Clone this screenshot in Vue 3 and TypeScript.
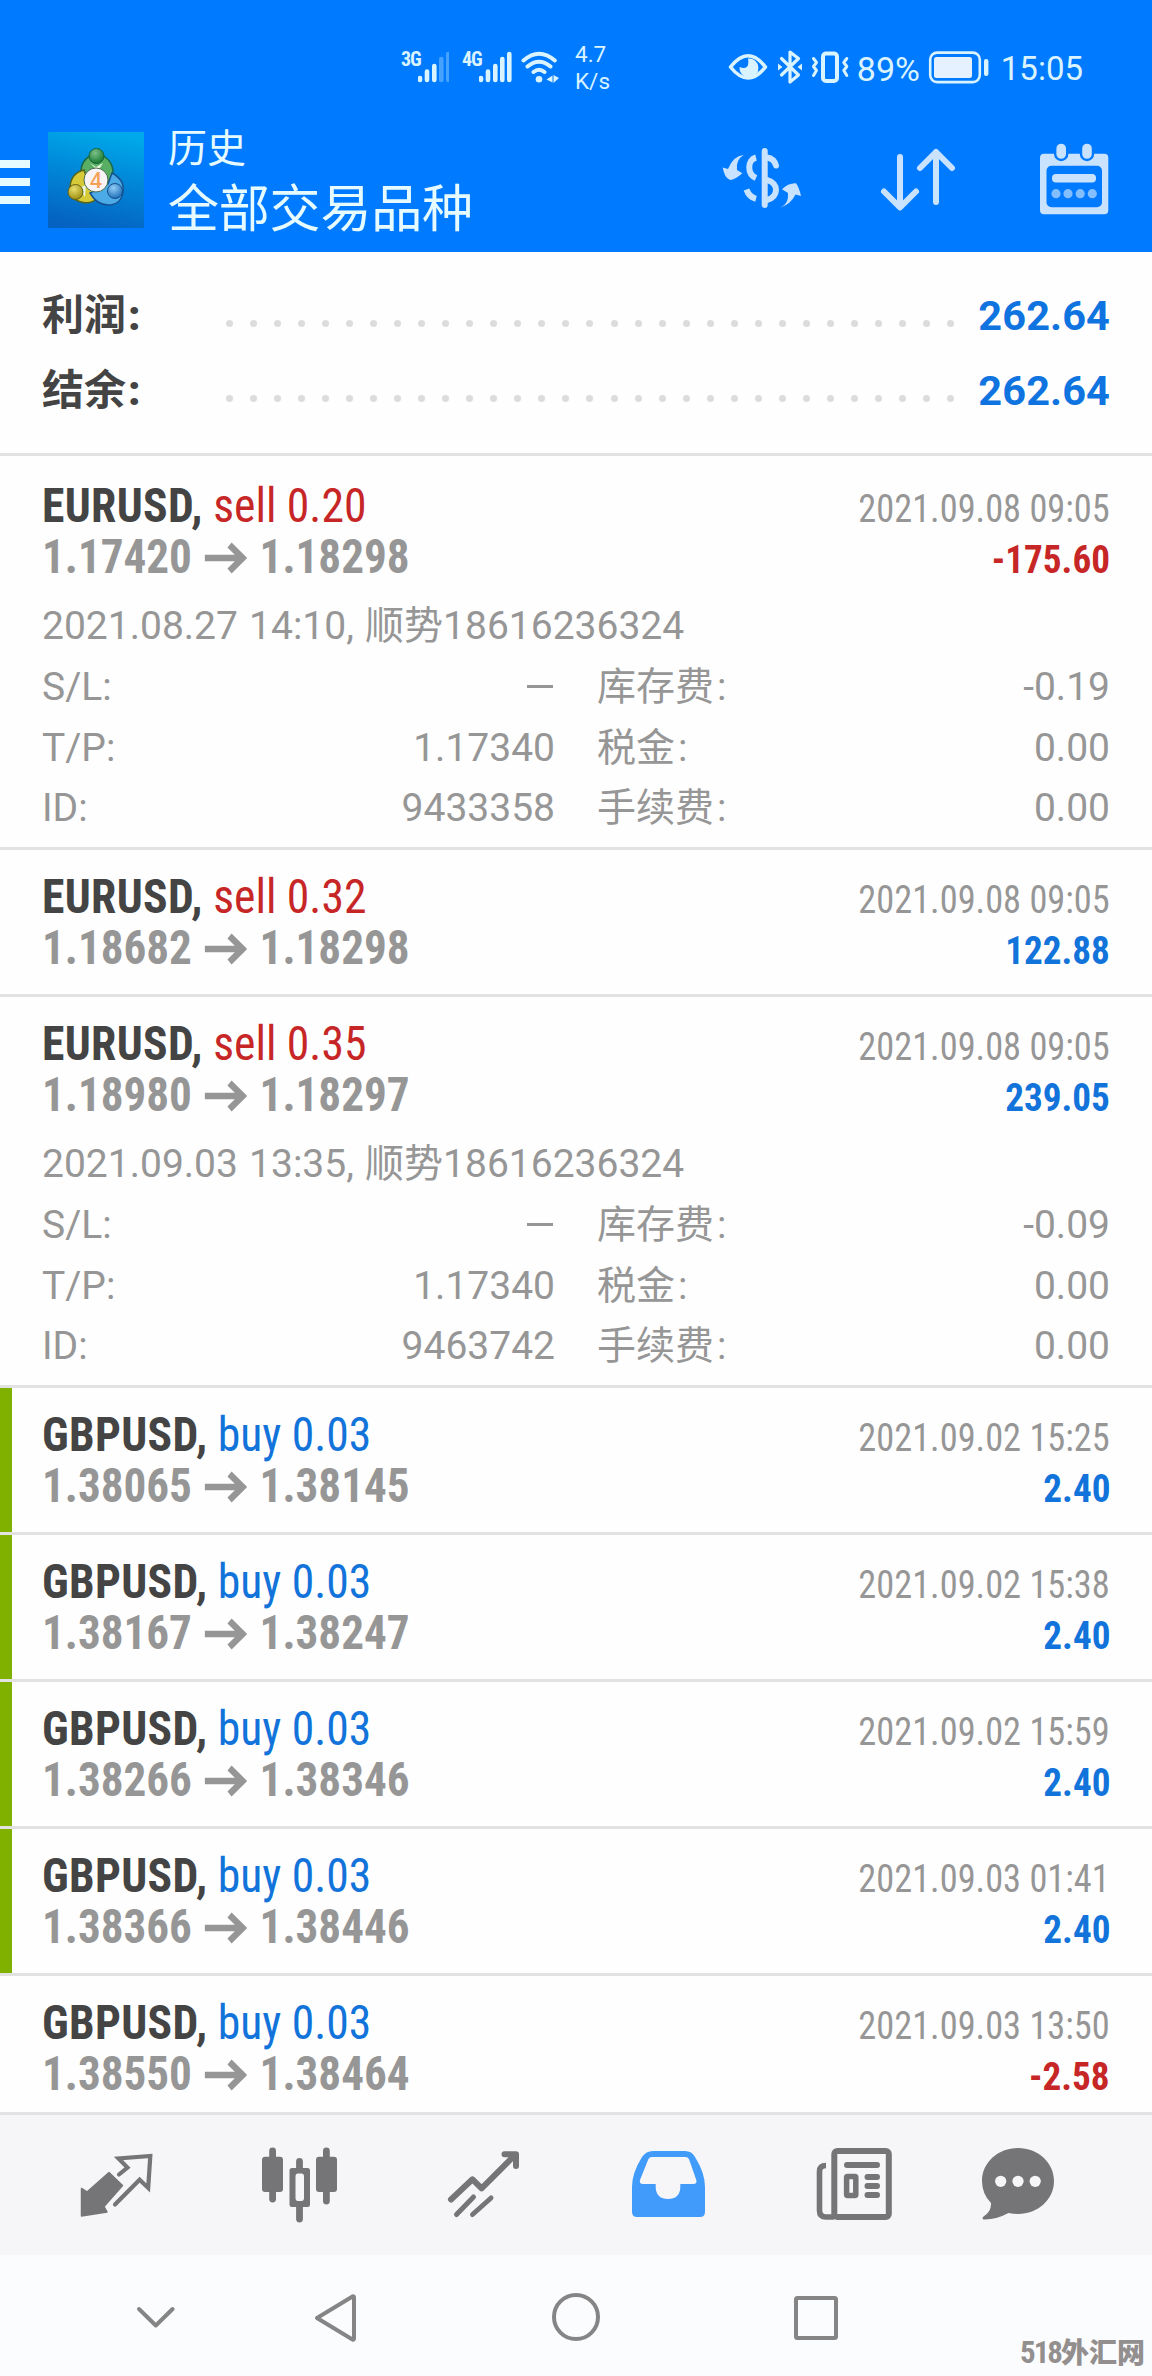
<script setup lang="ts">
interface Details {
  opened: string
  tp: string
  id: string
  swap: string
}

interface Trade {
  symbol: string
  side: 'buy' | 'sell'
  volume: string
  from: string
  to: string
  closed: string
  profit: string
  marked?: boolean
  details?: Details
}

const summary = [
  { label: '利润', value: '262.64' },
  { label: '结余', value: '262.64' },
]

const trades: Trade[] = [
  {
    symbol: 'EURUSD', side: 'sell', volume: '0.20', from: '1.17420', to: '1.18298',
    closed: '2021.09.08 09:05', profit: '-175.60',
    details: { opened: '2021.08.27 14:10, 顺势18616236324', tp: '1.17340', id: '9433358', swap: '-0.19' },
  },
  {
    symbol: 'EURUSD', side: 'sell', volume: '0.32', from: '1.18682', to: '1.18298',
    closed: '2021.09.08 09:05', profit: '122.88',
  },
  {
    symbol: 'EURUSD', side: 'sell', volume: '0.35', from: '1.18980', to: '1.18297',
    closed: '2021.09.08 09:05', profit: '239.05',
    details: { opened: '2021.09.03 13:35, 顺势18616236324', tp: '1.17340', id: '9463742', swap: '-0.09' },
  },
  { symbol: 'GBPUSD', side: 'buy', volume: '0.03', from: '1.38065', to: '1.38145', closed: '2021.09.02 15:25', profit: '2.40', marked: true },
  { symbol: 'GBPUSD', side: 'buy', volume: '0.03', from: '1.38167', to: '1.38247', closed: '2021.09.02 15:38', profit: '2.40', marked: true },
  { symbol: 'GBPUSD', side: 'buy', volume: '0.03', from: '1.38266', to: '1.38346', closed: '2021.09.02 15:59', profit: '2.40', marked: true },
  { symbol: 'GBPUSD', side: 'buy', volume: '0.03', from: '1.38366', to: '1.38446', closed: '2021.09.03 01:41', profit: '2.40', marked: true },
  { symbol: 'GBPUSD', side: 'buy', volume: '0.03', from: '1.38550', to: '1.38464', closed: '2021.09.03 13:50', profit: '-2.58' },
]
</script>

<template>
  <div class="screen">
    <header class="top">
      <div class="status">
        <div class="status-left">
          <span class="net">3G</span>
          <svg class="bars" width="31" height="34" viewBox="418 50 31 34">
            <g stroke="#d9f3ff" stroke-width="4.6" stroke-linecap="round">
              <path d="M420 78v2M427 71.5v8.5M434.3 66v14" />
              <path d="M441.3 59v21M448.3 54v26" opacity=".32" />
            </g>
          </svg>
          <span class="net net-4g">4G</span>
          <svg class="bars" width="33" height="34" viewBox="479 50 33 34">
            <path d="M481 78v2M488 71.5v8.5M495.3 66v14M502.3 59v21M509.3 54v26" stroke="#d9f3ff" stroke-width="4.6" stroke-linecap="round" />
          </svg>
          <svg class="wifi" width="40" height="34" viewBox="520 50 40 34" fill="none">
            <path d="M523.5 60.5Q539 47 554.8 60.5M527.5 66.5Q539 57 550.5 66.5M533.5 72Q539 67.500 544.5 72" stroke="#d9f3ff" stroke-width="4" stroke-linecap="round" />
            <circle cx="539" cy="79.3" r="3.3" fill="#d9f3ff" />
            <path d="M546.5 79.500l6-4v7zM553.5 75l5.500 3-5.500 5z" fill="#d9f3ff" />
          </svg>
          <div class="speed"><span>4.7</span><span>K/s</span></div>
        </div>
        <div class="status-right">
          <svg width="122" height="40" viewBox="728 47 122 40" fill="none" stroke="#d9f3ff" stroke-width="3.6" stroke-linecap="round" stroke-linejoin="round">
            <path d="M730.5 67Q748 44.500 765.5 67Q748 89 730.5 67z" />
            <path d="M748 58.500a9.500 9.500 0 1 1-8.500 8.500q7 2.500 8.500-2q.8-3.200 0-6.500z" fill="#d9f3ff" stroke="none" />
            <path d="M781.5 58.500L798.5 75l-8.500 7V52l8.500 6.500L781.5 75" stroke-width="3.2" />
            <path d="M778 63.500v7l4.500-3.500zM802 63.500v7l-4.500-3.500z" fill="#d9f3ff" stroke="none" />
            <rect x="823" y="53.5" width="14" height="27.5" rx="3" stroke-width="4" />
            <path d="M813.5 58.500l3 4-3 4 3 4-3 5M846.8 58.500l-3 4 3 4-3 4 3 5" stroke-width="3" />
          </svg>
          <span class="percent">89%</span>
          <svg width="62" height="36" viewBox="927 49 62 36" fill="none">
            <rect x="929.2" y="52.6" width="49.6" height="29.5" rx="7" stroke="#d9f3ff" stroke-width="2.6" />
            <rect x="933" y="57" width="38" height="21" rx="2.5" fill="#e5f1ff" />
            <rect x="983" y="59" width="4.4" height="17" rx="2" fill="#d9f3ff" />
          </svg>
          <span class="clock">15:05</span>
        </div>
      </div>

      <div class="appbar">
        <div class="menu"><i></i><i></i><i></i></div>
        <svg class="logo" width="96" height="96" viewBox="0 0 96 96">
          <defs>
            <linearGradient id="lgBg" x1="0.6" y1="0" x2="0.4" y2="1">
              <stop offset="0" stop-color="#00a9ea" />
              <stop offset=".45" stop-color="#0087d8" />
              <stop offset="1" stop-color="#0562c0" />
            </linearGradient>
            <radialGradient id="lgGreen" cx=".4" cy=".3" r=".7"><stop offset="0" stop-color="#7cc089" /><stop offset="1" stop-color="#187a30" /></radialGradient>
            <radialGradient id="lgGold" cx=".4" cy=".3" r=".7"><stop offset="0" stop-color="#e9df6c" /><stop offset="1" stop-color="#9c8f12" /></radialGradient>
            <radialGradient id="lgBlue" cx=".4" cy=".3" r=".7"><stop offset="0" stop-color="#92cdf5" /><stop offset="1" stop-color="#1f70bb" /></radialGradient>
          </defs>
          <rect width="96" height="96" fill="url(#lgBg)" />
          <path d="M33 47Q31 30 42 24Q49 20 57 25Q68 33 64 49L48 47z" fill="#58ae62" stroke="#1a6845" stroke-width="1.5" />
          <path d="M36 38Q23 41 22 55Q21 67 33 70Q43 73 51 65L39 47z" fill="#d6cb36" stroke="#57651e" stroke-width="1.5" />
          <path d="M64 41Q77 48 75 60Q73 73 60 73Q49 73 42 61L60 52z" fill="#4caae6" stroke="#155292" stroke-width="1.5" />
          <path d="M42 31l6 4 7-4-5 8zM31 56l7-3-1 12zM60 55l8 1-5 9z" fill="#e7f6dd" />
          <circle cx="48.5" cy="24" r="7.5" fill="url(#lgGreen)" stroke="#17623b" />
          <circle cx="27.5" cy="60" r="7.5" fill="url(#lgGold)" stroke="#675f18" />
          <circle cx="67" cy="59" r="7.5" fill="url(#lgBlue)" stroke="#164e8c" />
          <circle cx="48" cy="48" r="12" fill="#f8f3f4" stroke="#486c51" />
          <text x="48" y="55.5" text-anchor="middle" font-family="Open Sans, sans-serif" font-weight="600" font-size="21" fill="#f6a055">4</text>
        </svg>
        <div class="titles">
          <div class="title-small">历史</div>
          <div class="title-big">全部交易品种</div>
        </div>
        <svg class="tools" width="392" height="80" viewBox="720 138 392 80" fill="none" stroke="#c9e3ff" stroke-linecap="round" stroke-linejoin="round">
          <path d="M764.7 151v54" stroke-width="6" />
          <path d="M756 157.500C747 160 747 174 756 178M746.5 189.500Q749 197 756 198.800" stroke-width="6" stroke-linecap="butt" />
          <path d="M767 157.500Q774 158.500 776 165.500M767 180C779 183 779 197 767 200" stroke-width="6" />
          <path d="M743.7 155Q735.5 160 737 170L742.3 173.300Q735 180 730 180Q724.5 178 722.7 167.500L728 169Q733 156 743.7 155z" fill="#c9e3ff" stroke="none" />
          <path d="M780.3 207.700Q789 204 788 193L782 189.300Q788 183 796 183.300Q799 187 801 196L795.5 194.500Q791 204 780.3 207.700z" fill="#c9e3ff" stroke="none" />
          <path d="M900 157v50M884 191.500L900 207.500L916 191.500M936 202v-50M920 168L936 152L952 168" stroke-width="6" />
          <g fill="#c9e3ff" stroke="none">
            <path fill-rule="evenodd" d="M1044 153.700h60.300a4 4 0 0 1 4 4v52.600a4 4 0 0 1-4 4h-60.300a4 4 0 0 1-4-4v-52.600a4 4 0 0 1 4-4zM1051.5 165.700a5 5 0 0 0-5 5v31.600a5 5 0 0 0 5 5h45.500a5 5 0 0 0 5-5v-31.600a5 5 0 0 0-5-5z" />
            <rect x="1055.2" y="142.5" width="12" height="17.5" rx="6" stroke="#007aff" stroke-width="2.4" />
            <rect x="1081" y="142.5" width="12" height="17.5" rx="6" stroke="#007aff" stroke-width="2.4" />
            <rect x="1052" y="174" width="44" height="8.4" rx="4" />
            <g opacity=".65"><circle cx="1056" cy="193.7" r="4.6" /><circle cx="1068" cy="193.7" r="4.6" /><circle cx="1080.2" cy="193.7" r="4.6" /><circle cx="1092.3" cy="193.7" r="4.6" /></g>
          </g>
        </svg>
      </div>
    </header>

    <main class="list">
      <section class="summary">
        <div v-for="row in summary" :key="row.label" class="sum-row">
          <span class="sum-label">{{ row.label }}<b>:</b></span>
          <span class="dots"><i v-for="n in 31" :key="n"></i></span>
          <span class="sum-value">{{ row.value }}</span>
        </div>
      </section>

      <article v-for="trade in trades" :key="trade.from" class="trade" :class="{ marked: trade.marked }">
        <div class="line">
          <span class="name"><b>{{ trade.symbol }},</b> <span :class="trade.side">{{ trade.side }} {{ trade.volume }}</span></span>
          <time class="closed">{{ trade.closed }}</time>
        </div>
        <div class="line">
          <span class="price">
            <span>{{ trade.from }}</span>
            <svg width="45" height="32" viewBox="0 0 45 32" fill="none" stroke="#969696" stroke-width="6.5">
              <path d="M0 16h40M26.500 3l14 13-14 13" />
            </svg>
            <span>{{ trade.to }}</span>
          </span>
          <span class="profit" :class="{ loss: trade.profit.startsWith('-') }">{{ trade.profit }}</span>
        </div>
        <div v-if="trade.details" class="details">
          <div class="opened">{{ trade.details.opened }}</div>
          <div class="grid">
            <span>S/L:</span><span class="num"><i class="dash"></i></span><span class="cn">库存费<em>:</em></span><span class="num">{{ trade.details.swap }}</span>
            <span>T/P:</span><span class="num">{{ trade.details.tp }}</span><span class="cn">税金<em>:</em></span><span class="num">0.00</span>
            <span>ID:</span><span class="num">{{ trade.details.id }}</span><span class="cn">手续费<em>:</em></span><span class="num">0.00</span>
          </div>
        </div>
      </article>
    </main>

    <nav class="tabs">
      <svg width="1152" height="140" viewBox="0 2115 1152 140" fill="none" stroke="#757577" stroke-linecap="round" stroke-linejoin="round">
        <path d="M119 2174.500L127.5 2167.500L118.5 2158.500L150.3 2156L148.2 2188L139.6 2179.800L115 2204.500" stroke-width="4.2" stroke-linejoin="miter" />
        <path d="M81.5 2188.500L87 2192L109 2172.500L122.5 2185.500L104 2206.500L107 2212L81.5 2216z" fill="#757577" stroke-width="1.5" />
        <path d="M272.6 2151v48M326.4 2151v50M299.5 2161.500v8M299.5 2207v12" stroke-width="6.8" />
        <g fill="#757577" stroke="none">
          <rect x="262" y="2156.7" width="21" height="35.3" rx="3" />
          <rect x="316" y="2156.7" width="21" height="35.3" rx="3" />
          <path fill-rule="evenodd" d="M292 2168h15.500q2.500 0 2.500 2.500v34q0 2.500-2.500 2.500h-15.500q-2.500 0-2.500-2.500v-34q0-2.500 2.500-2.500zM298 2173.500q-2.500 0-2.500 3v21.500q0 3 2.500 3h3.500q2.500 0 2.500-3v-21.500q0-3-2.500-3z" />
        </g>
        <path d="M451 2199.500L472.5 2179.300L481.6 2188.300L515.5 2154.500M504.5 2154.200H516V2166" stroke-width="6" />
        <path d="M473.5 2197L456.5 2214.500M491 2198L472.5 2214.500" stroke-width="5" />
        <path fill="#419bfb" stroke="none" fill-rule="evenodd" d="M653 2151h32q7 0 10 6q10 16 10 30v25q0 5-5 5h-63q-5 0-5-5v-25q0-14 10-30q4-6 11-6zM652 2157q-3 0-4 3l-8 20q-1 4 3 4h12.700v4q1 11 12.300 11t12.300-11v-4h13q4 0 3-4l-7-20q-1-3-4-3z" />
        <rect x="834.3" y="2151" width="54.5" height="66" rx="3" stroke-width="6" />
        <path d="M826 2165.500q-6.500 0-6.500 6v39q0 6.500 6.500 6.500h8" stroke-width="5.6" stroke-linecap="butt" />
        <path d="M847 2165h30M867.5 2177h9.500M867.5 2186h9.500M867.5 2195h9.500" stroke-width="6" />
        <rect x="846.6" y="2176.5" width="9.2" height="19" rx="1" stroke-width="5.5" />
        <path fill="#757577" stroke="none" d="M1018 2148c20 0 36 14.500 36 33s-16 33-36 33q-5 0-9.500-1q-13 7-25 6.500q-2-1 0-3q8-5 7.500-13.500q-9-9-9-22c0-18.500 16-33 36-33z" />
        <g fill="#f6f6f8" stroke="none"><circle cx="1000.7" cy="2181.3" r="5.6" /><circle cx="1018" cy="2181.3" r="5.6" /><circle cx="1035.2" cy="2181.3" r="5.6" /></g>
      </svg>
    </nav>

    <footer class="system">
      <svg width="1152" height="121" viewBox="0 2255 1152 121" fill="none" stroke="#858585" stroke-width="4" stroke-linecap="round" stroke-linejoin="round">
        <path d="M139 2309L155.8 2325.500L172.6 2309" />
        <path d="M317 2318L352.5 2296.500q1.500-.5 1.500 1v41q0 1.500-1.500 1z" />
        <circle cx="576" cy="2317" r="22" />
        <rect x="796" y="2298" width="40" height="40" rx="1.5" />
      </svg>
      <div class="watermark"><span>518</span>外汇网</div>
    </footer>
  </div>
</template>

<style>
body {
  margin: 0;
  background: #fff;
}
</style>

<style scoped>
.screen {
  width: 1152px;
  height: 2376px;
  display: flex;
  flex-direction: column;
  overflow: hidden;
  background: #fefefe;
  font-family: Roboto, "Noto Sans CJK SC", sans-serif;
}
.top {
  height: 252px;
  flex: none;
  background: #007aff;
  color: #e6fbff;
}
.status {
  height: 110px;
  display: flex;
  justify-content: space-between;
  padding: 0 69px 0 401px;
  color: #d9f3ff;
}
.status svg { flex: none; }
.status-left {
  display: flex;
  padding-top: 50px;
  box-sizing: border-box;
}
.net {
  width: 17px;
  font-size: 20px;
  line-height: 18px;
  font-weight: 700;
  font-stretch: 75%;
  letter-spacing: -1px;
  white-space: nowrap;
}
.net-4g { margin-left: 13px; }
.wifi { margin-left: 8px; }
.speed {
  margin: -9px 0 0 15px;
  display: flex;
  flex-direction: column;
  font-size: 22.5px;
  line-height: 27px;
}
.status-right {
  display: flex;
  align-items: center;
  height: 40px;
  padding-top: 47px;
}
.percent {
  width: 71px;
  margin-left: 7px;
  padding-top: 3px;
  font-size: 34px;
  line-height: 40px;
}
.clock {
  margin-left: 11px;
  padding-top: 3px;
  font-size: 33px;
  line-height: 40px;
}
.appbar {
  height: 142px;
  display: flex;
  align-items: flex-start;
}
.menu {
  width: 30px;
  padding-top: 50px;
  display: flex;
  flex-direction: column;
  gap: 10px;
}
.menu i { height: 8px; background: #e6fbff; }
.logo { margin: 22px 0 0 18px; flex: none; }
.titles {
  margin-left: 24px;
  width: 552px;
  font-family: "Noto Sans CJK SC", sans-serif;
}
.title-small { margin-top: 12px; font-size: 39px; line-height: 46px; }
.title-big { font-size: 51px; line-height: 76px; margin-top: -1px; letter-spacing: -0.2px; }
.tools { margin-top: 28px; flex: none; }

.list {
  height: 1860px;
  flex: none;
  overflow: hidden;
}
.summary {
  box-sizing: border-box;
  height: 204px;
  padding: 26px 42px 0;
  border-bottom: 3px solid #e2e2e2;
}
.sum-row {
  height: 75px;
  display: flex;
  line-height: 76px;
  font-size: 41.5px;
  font-weight: 700;
}
.sum-label { width: 184px; color: #444; font-size: 42px; }
.sum-label b { margin-left: 2px; }
.dots {
  width: 728px;
  display: flex;
  justify-content: space-between;
  padding-top: 42px;
}
.dots i { width: 7px; height: 7px; border-radius: 50%; background: #dcdcdc; }
.sum-value { margin-left: auto; color: #0f74e0; letter-spacing: 0.1px; }

.trade {
  box-sizing: border-box;
  padding: 21px 42px;
  border-bottom: 3px solid #e2e2e2;
}
.summary + .trade { padding-top: 24px; }
.trade:has(.details) { padding-bottom: 9px; }
.marked { box-shadow: inset 12px 0 0 #80b000; }
.line {
  height: 51px;
  display: flex;
  justify-content: space-between;
  align-items: baseline;
  font-size: 48px;
  line-height: 51px;
  font-stretch: 75%;
  white-space: nowrap;
}
.name { transform: scaleX(0.95); transform-origin: 0 50%; }
.name b { color: #444; letter-spacing: 0.35px; }
.sell { color: #c72626; }
.buy { color: #1273da; }
.closed {
  font-size: 39px;
  color: #969696;
  transform: scaleX(0.932);
  transform-origin: 100% 50%;
}
.price {
  display: flex;
  font-weight: 700;
  color: #969696;
  transform: scaleX(0.94);
  transform-origin: 0 50%;
}
.price svg { margin: 10.5px 14px 0 13px; }
.profit {
  font-size: 39px;
  font-weight: 700;
  color: #1273da;
  transform: scaleX(0.953);
  transform-origin: 100% 50%;
}
.loss { color: #c72626; }
.details {
  margin-top: 14px;
  font-size: 39px;
  line-height: 60.5px;
  color: #969696;
}
.opened { height: 60.5px; white-space: nowrap; word-spacing: 1.5px; }
.grid {
  display: grid;
  grid-template-columns: 200px 313px 242px 313px;
  grid-template-rows: 61px 60px 60.5px;
}
.num { text-align: right; }
.cn { padding-left: 42px; white-space: nowrap; }
.cn em { font-style: normal; margin-left: 3px; }
.dash {
  display: inline-block;
  width: 26px;
  height: 3px;
  margin: 0 2px 12px 0;
  background: #969696;
}

.tabs {
  height: 140px;
  flex: none;
  border-top: 3px solid #e2e2e2;
  background: #f6f6f8;
}
.tabs svg, .system svg { display: block; }
.system { height: 121px; position: relative; background: #fbfcfe; }
.watermark {
  position: absolute;
  right: 7px;
  top: 76px;
  font: 900 28px/40px "Noto Sans CJK SC", sans-serif;
  color: #938f8f;
  white-space: nowrap;
}
.watermark span {
  font-family: Roboto, sans-serif;
  font-size: 31px;
  font-weight: 700;
  font-stretch: 75%;
  letter-spacing: -2px;
}
</style>
